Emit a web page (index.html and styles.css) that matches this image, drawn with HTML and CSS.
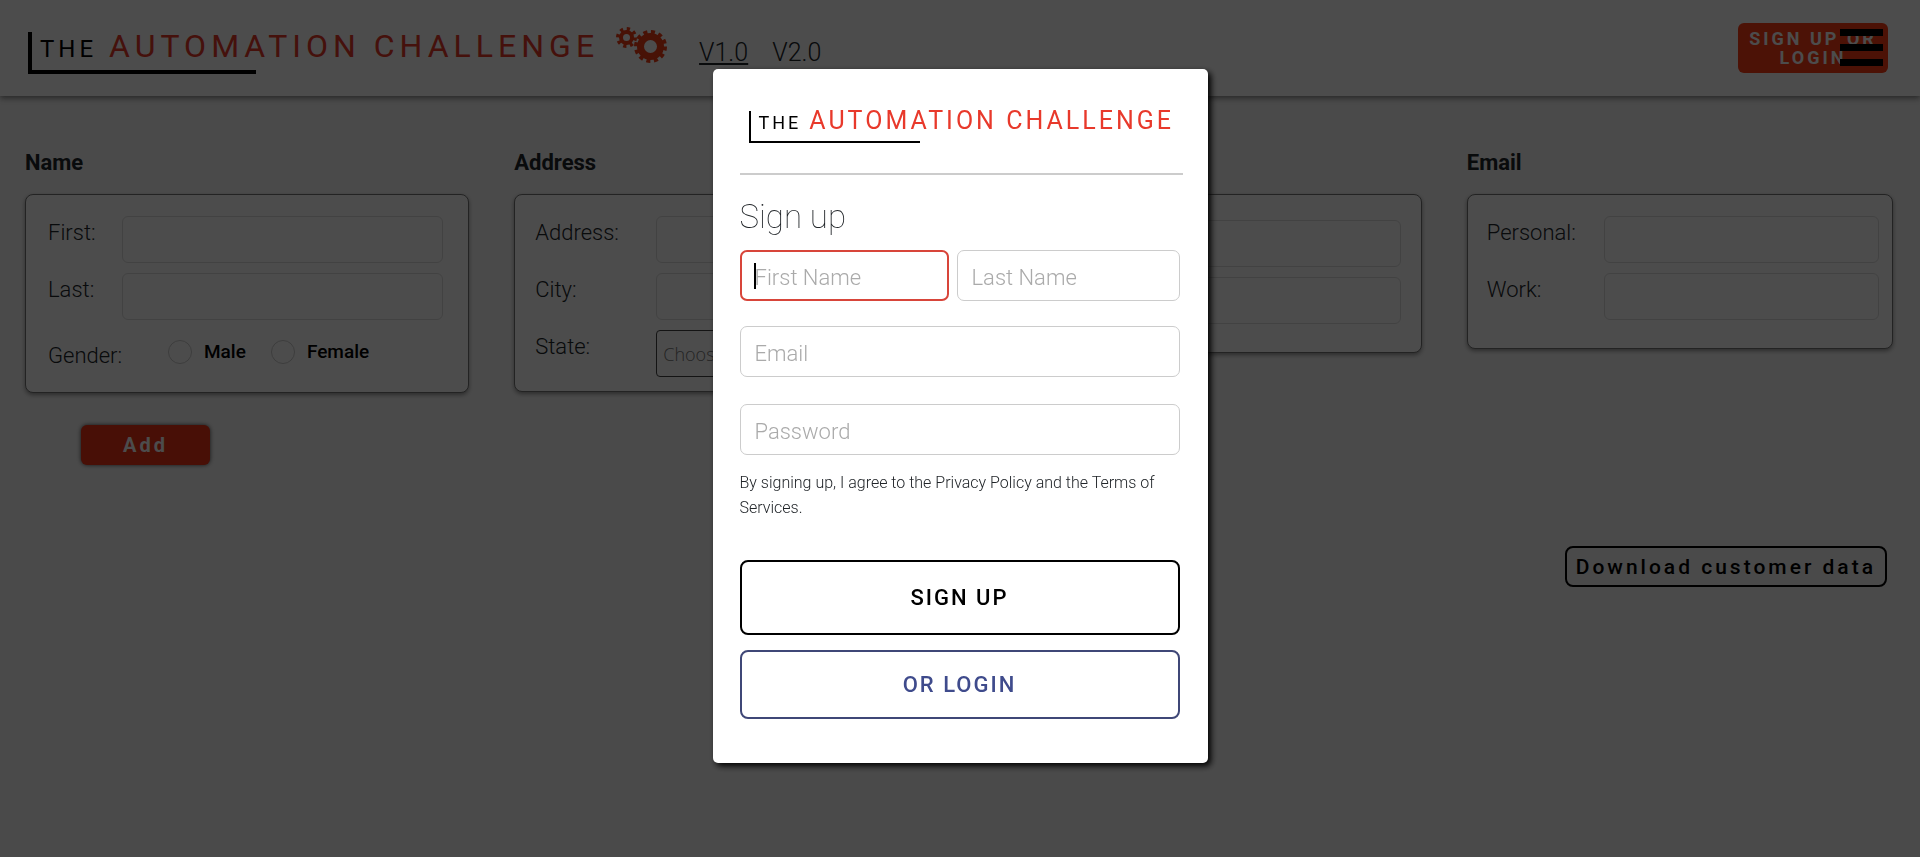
FILE: index.html
```html
<!DOCTYPE html>
<html lang="en">
<head>
<meta charset="utf-8">
<meta name="viewport" content="width=device-width, initial-scale=1">
<title>The Automation Challenge</title>
<link rel="stylesheet" href="styles.css">
</head>
<body>
<header class="topbar">
  <a class="brand" href="#"><span class="brand-the">THE</span> <span class="brand-name">AUTOMATION CHALLENGE</span></a>
  <svg class="gears" viewBox="0 0 52 38" aria-hidden="true">
    <g fill="none" stroke="#f03c14">
      <circle cx="34.5" cy="20.5" r="10" stroke-width="7"/>
      <circle cx="34.5" cy="20.5" r="14.5" stroke-width="4" stroke-dasharray="4 3.592"/>
      <circle cx="10.5" cy="11.5" r="5.5" stroke-width="4"/>
      <circle cx="10.5" cy="11.5" r="8.5" stroke-width="4" stroke-dasharray="3.1 3.576"/>
    </g>
  </svg>
  <nav class="versions">
    <a class="version current" href="#v1">V1.0</a>
    <a class="version" href="#v2">V2.0</a>
  </nav>
  <div class="account">
    <button class="account-button" type="button">SIGN UP OR LOGIN</button>
    <button class="menu-button" type="button" aria-label="Menu"><i></i><i></i><i></i></button>
  </div>
</header>

<main class="page">
  <form class="groups">
    <section class="group">
      <h2 class="group-title">Name</h2>
      <div class="card card-name">
        <label class="label" for="first">First:</label><input class="field" id="first" type="text">
        <label class="label" for="last">Last:</label><input class="field" id="last" type="text">
        <span class="label">Gender:</span>
        <div class="radios">
          <label class="radio"><input type="radio" name="gender">Male</label>
          <label class="radio"><input type="radio" name="gender">Female</label>
        </div>
      </div>
    </section>
    <section class="group">
      <h2 class="group-title">Address</h2>
      <div class="card card-address">
        <label class="label" for="address">Address:</label><input class="field" id="address" type="text">
        <label class="label" for="city">City:</label><input class="field" id="city" type="text">
        <label class="label" for="state">State:</label>
        <select class="field select" id="state"><option>Choose...</option></select>
      </div>
    </section>
    <section class="group">
      <h2 class="group-title">Phone</h2>
      <div class="card card-phone">
        <label class="label" for="home">Home:</label><input class="field" id="home" type="text">
        <label class="label" for="cell">Cell:</label><input class="field" id="cell" type="text">
      </div>
    </section>
    <section class="group">
      <h2 class="group-title">Email</h2>
      <div class="card card-email">
        <label class="label" for="personal">Personal:</label><input class="field" id="personal" type="text">
        <label class="label" for="work">Work:</label><input class="field" id="work" type="text">
      </div>
    </section>
  </form>
  <button class="add-button" type="button">Add</button>
  <button class="download-button" type="button">Download customer data</button>
</main>

<div class="overlay">
  <form class="modal" role="dialog" aria-labelledby="modal-title">
    <div class="modal-head">
      <div class="brand brand-small"><span class="brand-the">THE</span> <span class="brand-name">AUTOMATION CHALLENGE</span></div>
    </div>
    <h1 class="modal-title" id="modal-title">Sign up</h1>
    <div class="modal-fields">
      <div class="name-row">
        <div class="focused"><input class="modal-input" type="text" placeholder="First Name" aria-label="First Name"><span class="caret"></span></div>
        <input class="modal-input" type="text" placeholder="Last Name" aria-label="Last Name">
      </div>
      <input class="modal-input" type="email" placeholder="Email" aria-label="Email">
      <input class="modal-input" type="password" placeholder="Password" aria-label="Password">
    </div>
    <p class="terms">By signing up, I agree to the Privacy Policy and the Terms of Services.</p>
    <button class="action action-signup" type="button">SIGN UP</button>
    <button class="action action-login" type="button">OR LOGIN</button>
  </form>
</div>
</body>
</html>
```
FILE: styles.css
```css
* { box-sizing: border-box; }
body {
  margin: 0;
  min-height: 100vh;
  background: #f8f8f8;
  color: #212529;
  font-family: Roboto, "Liberation Sans", sans-serif;
  font-size: 20px;
  overflow-x: hidden;
}
button, input, select { font: inherit; }
h1, h2, p { margin: 0; }

.topbar {
  display: flex;
  align-items: flex-start;
  height: 96px;
  padding-left: 28px;
  padding-right: 32px;
  background: #fff;
  box-shadow: 0 2px 6px rgba(0, 0, 0, .5);
}
.brand {
  position: relative;
  display: flex;
  align-items: baseline;
  gap: 12px;
  height: 42px;
  margin-top: 32px;
  padding-left: 12px;
  line-height: 28px;
  color: #000;
  text-decoration: none;
  white-space: nowrap;
}
.brand::before {
  content: "";
  position: absolute;
  inset: 0 auto 0 0;
  width: 224px;
  border-left: 4px solid #000;
  border-bottom: 4px solid #000;
}
.brand-the { font-size: 24px; letter-spacing: 4px; }
.brand-name { font-size: 32px; letter-spacing: 5px; color: #e8392b; }
.gears { width: 52px; height: 38px; margin: 26px 0 0 17px; }
.versions { display: flex; gap: 24px; margin: 37px 0 0 31px; }
.version { color: #212529; font-size: 25px; font-weight: 300; line-height: 32px; text-decoration: none; }
.current { text-decoration: underline; text-decoration-thickness: 2px; text-underline-offset: 2px; }
.account { position: relative; margin: 23px 0 0 auto; }
.account-button {
  width: 150px;
  height: 50px;
  padding: 0 8px;
  border: 0;
  border-radius: 6px;
  background: #ff3c14;
  color: #fff;
  font-size: 18px;
  font-weight: 700;
  line-height: 19px;
  letter-spacing: 3px;
}
.menu-button {
  position: absolute;
  right: 5px;
  top: 6px;
  display: flex;
  flex-direction: column;
  gap: 8px;
  width: 43px;
  padding: 0;
  border: 0;
  background: none;
}
.menu-button i { height: 7px; background: #000; }

.page { display: flex; flex-direction: column; padding: 50px 27px 0 25px; }
.groups { display: grid; grid-template-columns: 444fr 470fr 392fr 426fr; gap: 45px; align-items: start; min-height: 279px; }
.group-title { margin-bottom: 14px; font-size: 22px; font-weight: 700; line-height: 34px; }
.card {
  display: grid;
  grid-auto-rows: 47px;
  row-gap: 10px;
  align-items: start;
  padding: 21px 25px 15px 22px;
  border: 1px solid #777;
  border-radius: 8px;
  background: #fff;
  box-shadow: 0 2px 4px rgba(0, 0, 0, .4);
}
.card-name { grid-template-columns: 74px 1fr; }
.card-address { grid-template-columns: 121px 1fr; padding-bottom: 14px; padding-left: 20px; }
.card-phone { grid-template-columns: 100px 1fr; padding: 25px 20px 28px; }
.card-email { grid-template-columns: 117px 1fr; padding: 21px 13px 28px 19px; }
.label { font-size: 22px; font-weight: 300; line-height: 34px; }
.field {
  width: 100%;
  height: 47px;
  padding: 0 12px;
  border: 1px solid #ddd;
  border-radius: 6px;
  background: #fff;
}
.select { appearance: none; padding: 0 6px; border-color: #444; border-radius: 4px; color: #777; font-family: "Open Sans", sans-serif; font-size: 18px; font-weight: 300; }
.card-name > span { padding-top: 9px; }
.radios { display: flex; gap: 25px; padding: 8px 0 0 46px; }
.radio { display: flex; align-items: center; gap: 12px; color: #000; font-size: 19px; font-weight: 500; line-height: 28px; }
.radio input { appearance: none; width: 24px; height: 24px; margin: 0; border: 1px solid #ccc; border-radius: 50%; }
.add-button {
  width: 129px;
  height: 40px;
  margin-left: 56px;
  border: 0;
  border-radius: 6px;
  background: #f03214;
  box-shadow: 0 0 4px rgba(0, 0, 0, .7);
  color: #fff;
  font-weight: 700;
  letter-spacing: 3px;
}
.download-button {
  align-self: flex-end;
  height: 41px;
  margin: 81px 6px 0 0;
  padding: 0 9px;
  border: 2px solid #000;
  border-radius: 8px;
  background: none;
  color: #000;
  font-size: 21px;
  font-weight: 500;
  letter-spacing: 3px;
}

.overlay {
  position: fixed;
  inset: 0;
  display: flex;
  justify-content: center;
  align-items: flex-start;
  padding: 69px 16px 0;
  background: rgba(0, 0, 0, .7);
}
.modal {
  display: flex;
  flex-direction: column;
  width: 100%;
  max-width: 495px;
  padding: 0 28px 44px 27px;
  border-radius: 5px;
  background: #fff;
  box-shadow: 3px 3px 6px #000;
}
.modal-head { padding: 42px 0 30px 9px; margin-right: -3px; border-bottom: 2px solid #ccc; }
.brand-small { height: 32px; margin: 0; padding-left: 10px; gap: 8px; line-height: 20px; }
.brand-small::before { width: 169px; border-width: 2px; }
.brand-small .brand-the { font-size: 18px; letter-spacing: 3px; }
.brand-small .brand-name { font-size: 25px; letter-spacing: 3px; }
.modal-title { margin: 21px 0 13px; font-size: 33px; font-weight: 100; line-height: 41px; }
.modal-fields { display: flex; flex-direction: column; gap: 27px; }
.name-row { display: grid; grid-template-columns: 209fr 223fr; gap: 8px; margin-bottom: -2px; }
.modal-input {
  width: 100%;
  height: 51px;
  padding: 4px 14px 0;
  border: 1px solid #ccc;
  border-radius: 7px;
  background: #fff;
  font-size: 22px;
  font-weight: 300;
}
.modal-input::placeholder { color: #aaa; }
.focused { position: relative; }
.focused .modal-input { padding-left: 13px; border: 2px solid #d8453a; }
.caret { position: absolute; left: 14px; top: 13px; width: 2px; height: 26px; background: #000; }
.terms { margin: 15px 0 40px; font-size: 16px; font-weight: 300; line-height: 25px; }
.action {
  height: 75px;
  border: 2px solid #000;
  border-radius: 8px;
  background: #fff;
  color: #000;
  font-size: 22px;
  font-weight: 500;
  letter-spacing: 2px;
}
.action-login { height: 69px; margin-top: 15px; border-color: #3f4777; color: #3f4b8c; }
```
